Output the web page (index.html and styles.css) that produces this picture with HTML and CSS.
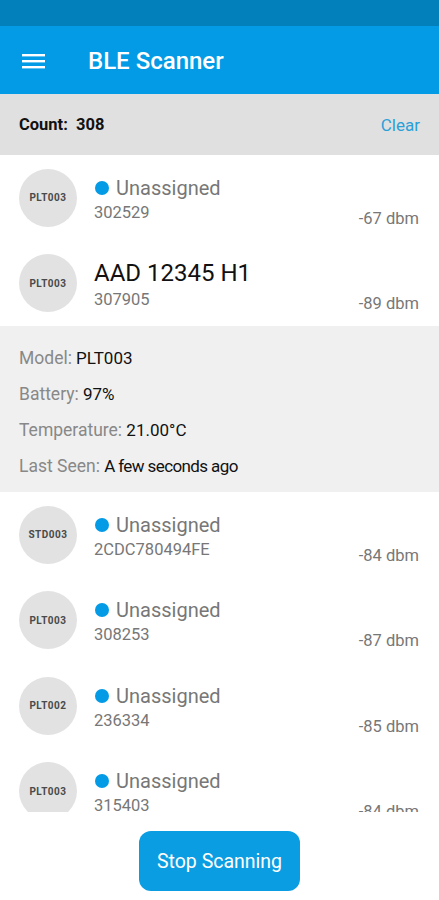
FILE: index.html
```html
<!DOCTYPE html>
<html>
<head>
<meta charset="utf-8">
<link rel="stylesheet" href="styles.css">
</head>
<body>
<div class="app">
  <div class="statusbar"></div>
  <header class="appbar">
    <svg class="menu" width="24" height="16" viewBox="0 0 24 16"><rect x="0" y="1" width="23" height="2.4" fill="#fff"/><rect x="0" y="7" width="23" height="2.4" fill="#fff"/><rect x="0" y="13" width="23" height="2.4" fill="#fff"/></svg>
    <div class="title">BLE Scanner</div>
  </header>
  <div class="countbar">
    <div class="count">Count:&nbsp; 308</div>
    <div class="clear">Clear</div>
  </div>
  <div class="list">
    <div class="row">
      <div class="avatar">PLT003</div>
      <div class="info">
        <div class="name"><span class="dot"></span>Unassigned</div>
        <div class="id">302529</div>
      </div>
      <div class="rssi">-67 dbm</div>
    </div>
    <div class="row">
      <div class="avatar">PLT003</div>
      <div class="info">
        <div class="name named">AAD 12345 H1</div>
        <div class="id">307905</div>
      </div>
      <div class="rssi">-89 dbm</div>
    </div>
    <div class="details">
      <div class="line"><span class="label">Model:</span> PLT003</div>
      <div class="line"><span class="label">Battery:</span> 97%</div>
      <div class="line"><span class="label">Temperature:</span> 21.00°C</div>
      <div class="line"><span class="label">Last Seen:</span> <span class="ago">A few seconds ago</span></div>
    </div>
    <div class="row">
      <div class="avatar">STD003</div>
      <div class="info">
        <div class="name"><span class="dot"></span>Unassigned</div>
        <div class="id">2CDC780494FE</div>
      </div>
      <div class="rssi">-84 dbm</div>
    </div>
    <div class="row">
      <div class="avatar">PLT003</div>
      <div class="info">
        <div class="name"><span class="dot"></span>Unassigned</div>
        <div class="id">308253</div>
      </div>
      <div class="rssi">-87 dbm</div>
    </div>
    <div class="row">
      <div class="avatar">PLT002</div>
      <div class="info">
        <div class="name"><span class="dot"></span>Unassigned</div>
        <div class="id">236334</div>
      </div>
      <div class="rssi">-85 dbm</div>
    </div>
    <div class="row">
      <div class="avatar">PLT003</div>
      <div class="info">
        <div class="name"><span class="dot"></span>Unassigned</div>
        <div class="id">315403</div>
      </div>
      <div class="rssi">-84 dbm</div>
    </div>
  </div>
  <div class="footer">
    <button class="scan">Stop Scanning</button>
  </div>
</div>
</body>
</html>
```
FILE: styles.css
```css
* { box-sizing: border-box; }
html, body { margin: 0; padding: 0; background: #fff; }
body { font-family: Roboto, "Noto Sans", sans-serif; }
.app { width: 439px; height: 900px; display: flex; flex-direction: column; overflow: hidden; }
.statusbar { height: 26px; background: #0280bb; flex: none; }
.appbar { height: 68px; background: #039be5; display: flex; align-items: center; padding-left: 22px; flex: none; }
.menu { display: block; margin-top: 2px; }
.title { color: #fff; font-size: 24px; font-weight: 500; margin-left: 42px; margin-top: 1px; }
.countbar { height: 61px; background: #e0e0e0; display: flex; align-items: center; justify-content: space-between; padding: 0 19px; flex: none; }
.count { font-size: 16.5px; font-weight: 700; color: #111; }
.clear { font-size: 17px; color: #2a9fd8; }
.list { flex: 1; overflow: hidden; }
.row { height: 85.5px; display: flex; align-items: center; padding: 0 20px 0 19px; }
.avatar { width: 58px; height: 58px; border-radius: 50%; background: #e2e2e2; display: flex; align-items: center; justify-content: center; font-size: 10px; font-weight: 700; color: #4a4a4a; letter-spacing: 0.5px; flex: none; }
.info { margin-left: 17px; margin-top: 3px; display: flex; flex-direction: column; gap: 3px; flex: 1; }
.name { font-size: 20px; line-height: 24px; color: #777; display: flex; align-items: center; }
.name.named { font-size: 24px; line-height: 28px; color: #111; }
.dot { width: 14px; height: 14px; border-radius: 50%; background: #039be5; margin: 0 7px 0 1px; flex: none; }
.id { font-size: 16.5px; line-height: 20px; color: #777; }
.rssi { align-self: flex-end; margin-bottom: 12px; font-size: 16.5px; line-height: 20px; color: #777; }
.details { background: #f0f0f0; padding: 14px 19px 8px; }
.line { font-size: 17px; line-height: 36px; color: #111; }
.label { color: #888; font-size: 17.5px; }
.ago { letter-spacing: -0.6px; }
.footer { height: 88px; flex: none; display: flex; justify-content: center; padding-top: 19px; background: #fff; }
.scan { width: 161px; height: 60px; border: none; border-radius: 12px; background: #0a9de2; color: #fff; font-family: Roboto, sans-serif; font-size: 19.5px; padding: 0; }
```
